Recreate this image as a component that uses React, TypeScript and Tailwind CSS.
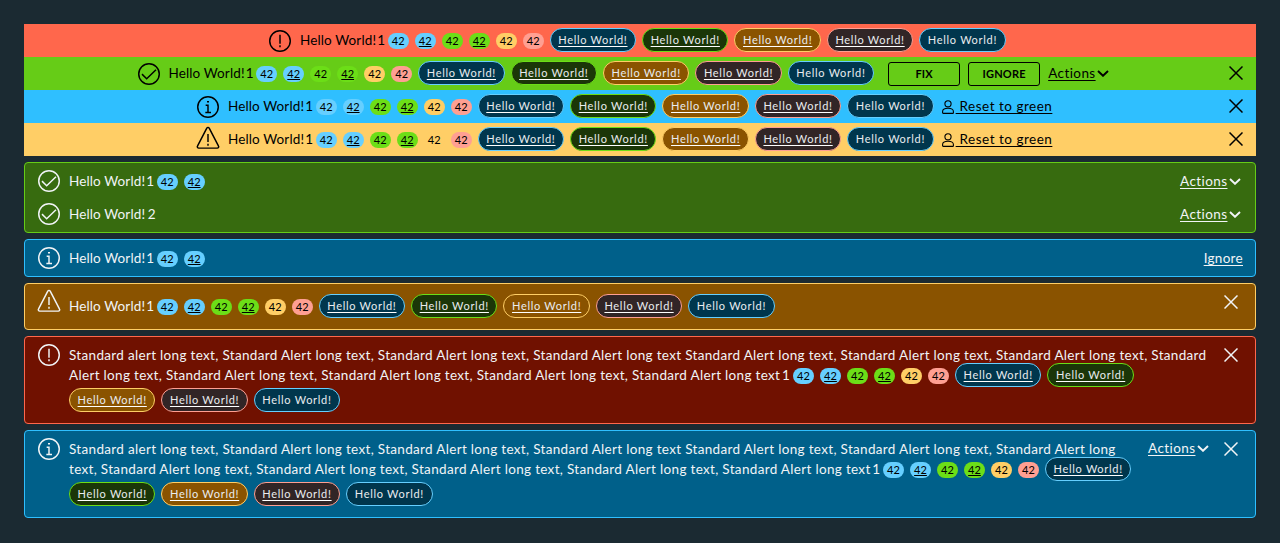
import React from "react";

type Tone = "info" | "success" | "warning" | "danger";

const badgeTone: Record<Tone, string> = {
  info: "bg-[#66cfff]",
  success: "bg-[#6cde17]",
  warning: "bg-[#ffce66]",
  danger: "bg-[#ff9f92]",
};

const labelTone: Record<Tone, string> = {
  info: "bg-[#00364d] border-[#66cfff]",
  success: "bg-[#1b3608] border-[#6cde17]",
  warning: "bg-[#8a5300] border-[#ffce66]",
  danger: "bg-[#312526] border-[#ff9f92]",
};

function Badge({ tone, link = false }: { tone: Tone; link?: boolean }) {
  return (
    <span className={`mt-[5px] mr-1.5 flex h-4 w-[21px] shrink-0 justify-center rounded-full text-[11px] leading-[15px] tracking-normal text-black ${badgeTone[tone]}`}>
      <span className={link ? "underline decoration-1 underline-offset-1" : ""}>42</span>
    </span>
  );
}

function Label({ tone, link = true }: { tone: Tone; link?: boolean }) {
  return (
    <span className={`mr-1.5 flex h-6 w-[86.4px] shrink-0 justify-center rounded-full border text-[11px] leading-[22px] tracking-[0.700px] text-[#e9ecef] ${labelTone[tone]}`}>
      <span className={link ? "underline decoration-white decoration-1 underline-offset-2" : ""}>Hello World!</span>
    </span>
  );
}

function Badges() {
  return (
    <>
      <Badge tone="info" />
      <Badge tone="info" link />
      <Badge tone="success" />
      <Badge tone="success" link />
      <Badge tone="warning" />
      <Badge tone="danger" />
    </>
  );
}

function Labels() {
  return (
    <>
      <Label tone="info" />
      <Label tone="success" />
      <Label tone="warning" />
      <Label tone="danger" />
      <Label tone="info" link={false} />
    </>
  );
}

function StatusIcon({ tone }: { tone: Tone }) {
  return (
    <svg className="mr-2 -ml-px block size-6 shrink-0" viewBox="0 0 36 36" fill="none" stroke="currentColor" strokeWidth="2.2">
      {tone === "warning" ? (
        <path d="M16.2 3.2 2.2 30.2a2 2 0 0 0 1.8 3h28a2 2 0 0 0 1.800-3L19.8 3.200a2 2 0 0 0-3.600 0Z" />
      ) : (
        <circle cx="18" cy="18" r="15.400" />
      )}
      {tone === "success" && <path d="m7.500 18.200 7 7L28.500 11.500" />}
      {tone === "info" && <path d="M14.500 15.500H18V26M14 26.200h8.500M16.500 10h3" />}
      {tone === "danger" && <path d="M18 8.500v13.500M18 24.500v3" />}
      {tone === "warning" && <path d="M18 12v12M18 26.500v3" />}
    </svg>
  );
}

function CloseIcon() {
  return (
    <svg className="block size-3.5 shrink-0" viewBox="0 0 14 14" fill="none" stroke="currentColor" strokeWidth="1.5">
      <path d="m.5.5 13 13M13.500.5l-13 13" />
    </svg>
  );
}

function Chevron() {
  return (
    <svg className="block h-[7px] w-3 shrink-0" viewBox="0 0 12 7" fill="none" stroke="currentColor" strokeWidth="1.900">
      <path d="m1 1 5 4.800L11 1" />
    </svg>
  );
}

function Actions() {
  return (
    <span className="flex h-5 w-[62px] shrink-0 items-center text-[13.5px] leading-5">
      <span className="w-[47px] shrink-0 tracking-[0.420px] underline decoration-1 underline-offset-2">Actions</span>
      <span className="pl-0.5"><Chevron /></span>
    </span>
  );
}

function Message({ count, className = "leading-6" }: { count: number; className?: string }) {
  return (
    <span className={`w-[87.700px] shrink-0 text-[13.5px] tracking-[0.120px] ${className}`}>
      Hello World! <span className={count === 1 ? "-ml-[2.500px]" : "-ml-px"}>{count}</span>
    </span>
  );
}

function UserIcon() {
  return (
    <svg className="mt-[6px] mr-0.5 block h-3.5 w-3 shrink-0" viewBox="0 0 12 14" fill="none" stroke="currentColor" strokeWidth="1.100">
      <circle cx="6" cy="3.800" r="3.100" />
      <path d="M.6 11.500C.6 9.500 2.300 8.300 6 8.300s5.400 1.200 5.400 3.200v1.200a.7.7 0 0 1-.7.7H1.300a.7.7 0 0 1-.7-.7Z" />
    </svg>
  );
}

function ResetLink() {
  return (
    <span className="ml-0.5 flex">
      <UserIcon />
      <span className="text-[13.5px] leading-6 tracking-[0.500px] whitespace-pre underline decoration-1 underline-offset-2"> Reset to green</span>
    </span>
  );
}

function ActionButton({ children }: { children: React.ReactNode }) {
  return (
    <button className="mt-px mr-2 h-6 w-[72px] shrink-0 rounded-[3px] border border-black text-[11px] leading-[22px] font-bold tracking-[0.200px]">{children}</button>
  );
}

function AppAlert({ tone, className, closable = true, children }: { tone: Tone; className: string; closable?: boolean; children?: React.ReactNode }) {
  return (
    <div className={`flex h-[33px] items-start justify-between pt-1 pr-[13px] text-black ${className}`}>
      <div className="flex items-start whitespace-nowrap">
        <span className={tone === "warning" ? "-mt-px" : "mt-px"}><StatusIcon tone={tone} /></span>
        <Message count={1} className="leading-6" />
        <Badges />
        <Labels />
        {children}
      </div>
      {closable && <span className="mt-[5px]"><CloseIcon /></span>}
    </div>
  );
}

const card = "flex rounded border pl-[13px] text-[#f1f4f6] whitespace-nowrap";

export default function App() {
  return (
    <div className="h-[543px] bg-[#1b2a32] p-6 font-['Lato',sans-serif]">
      <AppAlert tone="danger" className="bg-[#ff674c] pl-[245px]" closable={false} />
      <AppAlert tone="success" className="bg-[#66cc17] pl-[113.500px]">
        <span className="ml-[8px] flex">
          <ActionButton>FIX</ActionButton>
          <ActionButton>IGNORE</ActionButton>
        </span>
        <span className="mt-[2px]"><Actions /></span>
      </AppAlert>
      <AppAlert tone="info" className="bg-[#2fbfff] pl-[173px]"><ResetLink /></AppAlert>
      <AppAlert tone="warning" className="bg-[#ffce66] pl-[173px]"><ResetLink /></AppAlert>

      <div className="mt-1.5 flex flex-col gap-1.5">
        <div className={`${card} h-[71px] flex-col border-[#66cc17] bg-[#376b0f] pt-1.5 pr-[13px]`}>
          <div className="flex h-[33px] shrink-0 items-start justify-between">
            <div className="flex">
              <StatusIcon tone="success" />
              <Message count={1} />
              <Badge tone="info" />
              <Badge tone="info" link />
            </div>
            <span className="mt-0.5"><Actions /></span>
          </div>
          <div className="flex items-start justify-between">
            <div className="flex">
              <StatusIcon tone="success" />
              <Message count={2} />
            </div>
            <span className="mt-0.5"><Actions /></span>
          </div>
        </div>

        <div className={`${card} h-[38px] items-start justify-between border-[#2fbfff] bg-[#00608a] pt-1.5 pr-3`}>
          <div className="flex">
            <StatusIcon tone="info" />
            <Message count={1} />
            <Badge tone="info" />
            <Badge tone="info" link />
          </div>
          <span className="text-[13.5px] leading-6 tracking-[0.300px] underline decoration-1 underline-offset-2">Ignore</span>
        </div>

        <div className={`${card} h-[47px] items-start justify-between border-[#ffce66] bg-[#8a5300] pr-[17px]`}>
          <div className="flex">
            <span className="mt-[5px]"><StatusIcon tone="warning" /></span>
            <div className="flex pt-2.5">
              <Message count={1} />
              <Badges />
              <Labels />
            </div>
          </div>
          <span className="mt-[11px]"><CloseIcon /></span>
        </div>

        <div className={`${card} h-[88px] items-start justify-between border-[#ff674c] bg-[#701100] pt-1.5 pr-[17px]`}>
          <div className="flex">
            <StatusIcon tone="danger" />
            <div className="text-[13.5px] leading-6 tracking-[0.322px]">
              <div className="h-5">Standard alert long text, Standard Alert long text, Standard Alert long text, Standard Alert long text Standard Alert long text, Standard Alert long text, Standard Alert long text, Standard</div>
              <div className="flex h-[25px]">
                <span className="w-[724px] shrink-0">Alert long text, Standard Alert long text, Standard Alert long text, Standard Alert long text, Standard Alert long text <span className="-ml-[2px]">1</span></span>
                <Badges />
                <Label tone="info" />
                <Label tone="success" />
              </div>
              <div className="flex">
                <Label tone="warning" />
                <Label tone="danger" />
                <Label tone="info" link={false} />
              </div>
            </div>
          </div>
          <span className="mt-[5px]"><CloseIcon /></span>
        </div>

        <div className={`${card} h-[88px] items-start justify-between border-[#2fbfff] bg-[#00608a] pt-1.5 pr-[17px]`}>
          <div className="flex">
            <StatusIcon tone="info" />
            <div className="text-[13.5px] leading-6 tracking-[0.322px]">
              <div className="h-5">Standard alert long text, Standard Alert long text, Standard Alert long text, Standard Alert long text Standard Alert long text, Standard Alert long text, Standard Alert long</div>
              <div className="flex h-[25px]">
                <span className="w-[814px] shrink-0">text, Standard Alert long text, Standard Alert long text, Standard Alert long text, Standard Alert long text, Standard Alert long text <span className="-ml-[2px]">1</span></span>
                <Badges />
                <Label tone="info" />
              </div>
              <div className="flex">
                <Label tone="success" />
                <Label tone="warning" />
                <Label tone="danger" />
                <Label tone="info" link={false} />
              </div>
            </div>
          </div>
          <div className="flex">
            <span className="mt-px mr-[14px]"><Actions /></span>
            <span className="mt-[5px]"><CloseIcon /></span>
          </div>
        </div>
      </div>
    </div>
  );
}
